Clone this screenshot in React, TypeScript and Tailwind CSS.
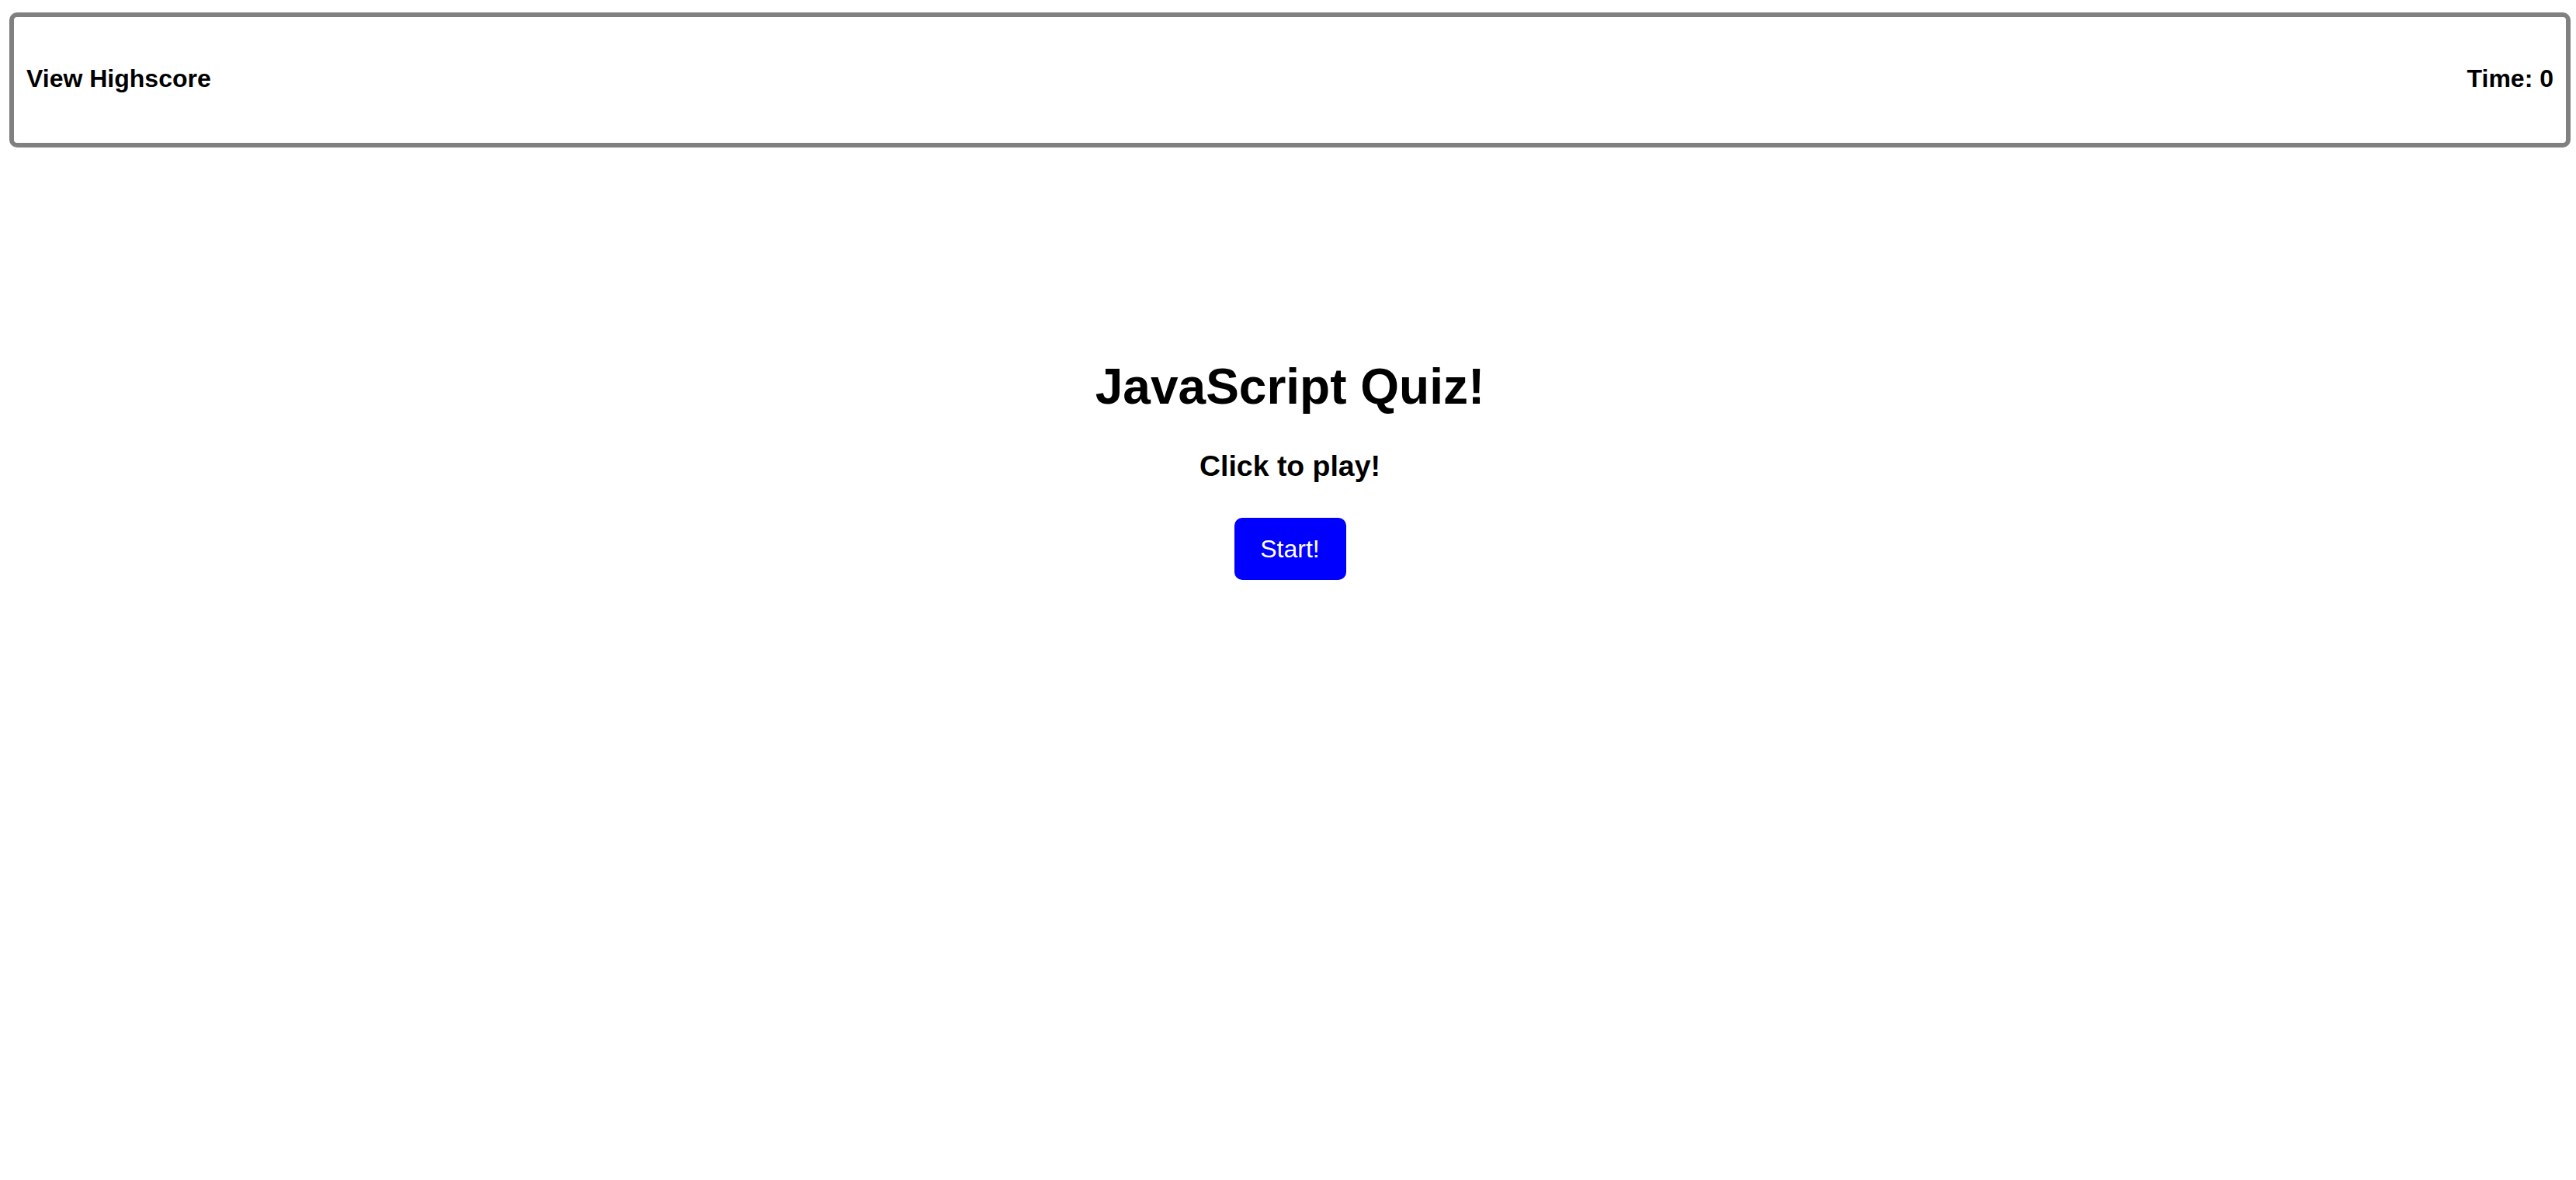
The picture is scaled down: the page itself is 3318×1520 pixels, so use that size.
import React from 'react';

export default function App() {
  return (
    <div className="min-h-screen bg-white pt-[16px] pl-[12px] pr-[7px] text-black font-['Liberation_Sans',Arial,sans-serif]">
      <header className="flex h-[174px] items-center justify-between rounded-[10px] border-[6px] border-[#808080] px-[16px] pb-[4px]">
        <span className="text-[32px] font-bold leading-[36px]">View Highscore</span>
        <span className="text-[32px] font-bold leading-[36px]">Time: 0</span>
      </header>

      <main className="flex flex-col items-center pt-[272px]">
        <h1 className="text-[64px] font-bold leading-[72px]">JavaScript Quiz!</h1>
        <h3 className="mt-[45px] text-[37.44px] font-bold leading-[42px]">Click to play!</h3>
        <button className="mt-[46px] flex h-[80px] w-[144px] items-center justify-center rounded-[10px] bg-[#0000ff] text-[32px] leading-[36px] text-white">
          Start!
        </button>
      </main>
    </div>
  );
}
